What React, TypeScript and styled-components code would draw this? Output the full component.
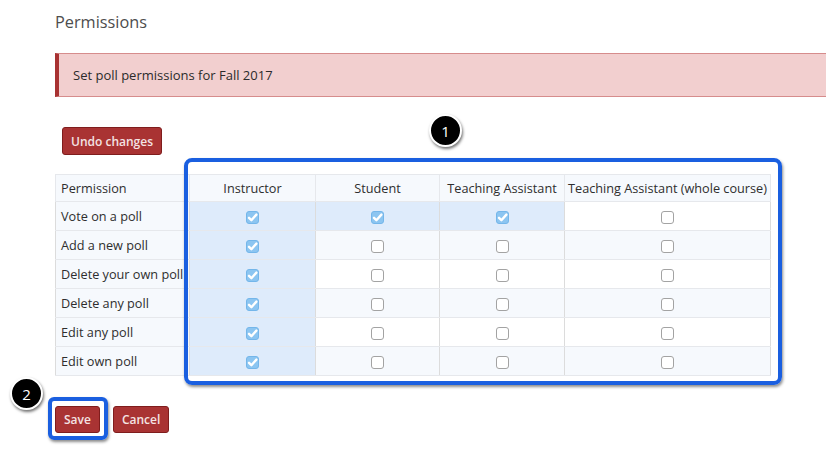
import React from 'react';
import styled, { createGlobalStyle } from 'styled-components';

const GlobalStyle = createGlobalStyle`
  html, body {
    margin: 0;
    padding: 0;
    background: #fff;
  }
  body {
    font-family: 'Open Sans', 'Noto Sans', Arial, sans-serif;
    color: #333;
  }
`;

const roles = ['Instructor', 'Student', 'Teaching Assistant', 'Teaching Assistant (whole course)'];

const permissions: { name: string; checks: boolean[] }[] = [
  { name: 'Vote on a poll', checks: [true, true, true, false] },
  { name: 'Add a new poll', checks: [true, false, false, false] },
  { name: 'Delete your own poll', checks: [true, false, false, false] },
  { name: 'Delete any poll', checks: [true, false, false, false] },
  { name: 'Edit any poll', checks: [true, false, false, false] },
  { name: 'Edit own poll', checks: [true, false, false, false] },
];

const Checkbox = ({ checked }: { checked: boolean }) => (
  <StyledCheckbox $checked={checked}>
    {checked && (
      <svg width='11' height='11' viewBox='0 0 11 11'>
        <path d='M2 5.8 L4.4 8.2 L9.4 2.6' fill='none' stroke='#fff' strokeWidth='2.4' strokeLinecap='round' strokeLinejoin='round' />
      </svg>
    )}
  </StyledCheckbox>
);

export default function App() {
  return (
    <>
      <GlobalStyle />
      <Page>
        <Title>Permissions</Title>
        <Alert>Set poll permissions for Fall 2017</Alert>
        <UndoButton>Undo changes</UndoButton>
        <Table>
          <colgroup>
            <col style={{ width: 134 }} />
            <col style={{ width: 126 }} />
            <col style={{ width: 124 }} />
            <col style={{ width: 125 }} />
            <col style={{ width: 206 }} />
          </colgroup>
          <thead>
            <tr>
              <th className='name'>Permission</th>
              {roles.map((role) => (
                <th key={role}>{role}</th>
              ))}
            </tr>
          </thead>
          <tbody>
            {permissions.map(({ name, checks }, index) => (
              <Row key={name} $striped={index % 2 === 1}>
                <td className='name'>{name}</td>
                {checks.map((checked, i) => (
                  <Cell key={i} $checked={checked}>
                    <Checkbox checked={checked} />
                  </Cell>
                ))}
              </Row>
            ))}
          </tbody>
        </Table>
        <Actions>
          <Button>Save</Button>
          <Button>Cancel</Button>
        </Actions>

        <Highlight className='table' />
        <Highlight className='save' />
        <Marker className='one'>1</Marker>
        <Marker className='two'>2</Marker>
      </Page>
    </>
  );
}

const Page = styled.div`
  position: relative;
  width: 826px;
  height: 461px;
  overflow: hidden;
  padding: 11px 0 0 55px;
  box-sizing: border-box;
`;

const Title = styled.h1`
  margin: 0;
  font-size: 16.3px;
  line-height: 22px;
  font-weight: 400;
  color: #4d4d4d;
`;

const Alert = styled.div`
  margin-top: 20px;
  margin-right: -2px;
  height: 44px;
  box-sizing: border-box;
  display: flex;
  align-items: center;
  padding-left: 14px;
  background: #f2cfcf;
  border: 1px solid #d68c8c;
  border-left: 4px solid #a83232;
  font-size: 13px;
  color: #2b2b2b;
`;

const BaseButton = styled.button`
  font-family: 'Open Sans', 'Noto Sans', Arial, sans-serif;
  font-size: 12px;
  font-weight: 600;
  color: #f4e3e3;
  background: #a93333;
  border: 1px solid #7f1d1d;
  border-radius: 3px;
  padding: 0 8px;
  height: 28px;
  white-space: nowrap;
  cursor: pointer;
`;

const UndoButton = styled(BaseButton)`
  display: block;
  margin: 30px 0 0 7px;
`;

const Table = styled.table`
  margin-top: 19px;
  border-collapse: collapse;
  table-layout: fixed;
  width: 715px;
  font-size: 12.7px;

  th,
  td {
    border: 1px solid #e6e8ec;
    padding: 0;
    text-align: center;
    white-space: nowrap;
    overflow: visible;
  }

  th {
    height: 26px;
    font-weight: 400;
    background: #f6f9fd;
    color: #2e2e2e;
  }

  .name {
    text-align: left;
    padding-left: 5px;
    background: #f6f9fd;
    color: #2e2e2e;
  }

  tbody td {
    border-color: #e6e8ec #dcdcdc;
  }
`;

const Row = styled.tr<{ $striped: boolean }>`
  height: 29px;
  background: ${({ $striped }) => ($striped ? '#f6f9fd' : '#fff')};
`;

const Cell = styled.td<{ $checked: boolean }>`
  background: ${({ $checked }) => ($checked ? '#deebfb' : 'transparent')};
`;

const StyledCheckbox = styled.span<{ $checked: boolean }>`
  display: inline-flex;
  align-items: center;
  justify-content: center;
  vertical-align: middle;
  width: 13px;
  height: 13px;
  box-sizing: border-box;
  border-radius: 3px;
  border: 1px solid ${({ $checked }) => ($checked ? '#74b6ea' : '#a3a3a3')};
  background: ${({ $checked }) => ($checked ? '#8cc5f1' : '#fff')};
`;

const Actions = styled.div`
  display: flex;
  gap: 13px;
  margin-top: 30px;
`;

const Button = styled(BaseButton)`
  height: 27px;
`;

const Highlight = styled.div`
  position: absolute;
  border: 4px solid #1a5fe0;
  border-radius: 8px;
  box-shadow: 1px 2px 3px rgba(0, 0, 0, 0.45);
  pointer-events: none;

  &.table {
    left: 184px;
    top: 158px;
    width: 590px;
    height: 219px;
  }

  &.save {
    left: 48px;
    top: 397px;
    width: 52px;
    height: 35px;
    border-radius: 6px;
  }
`;

const Marker = styled.div`
  position: absolute;
  width: 29px;
  height: 29px;
  border-radius: 50%;
  background: #000;
  border: 2px solid #fff;
  box-shadow: 1px 2px 3px rgba(0, 0, 0, 0.55);
  color: #fff;
  font-size: 15px;
  display: flex;
  align-items: center;
  justify-content: center;

  &.one {
    left: 429px;
    top: 114px;
  }

  &.two {
    left: 10px;
    top: 377px;
  }
`;
